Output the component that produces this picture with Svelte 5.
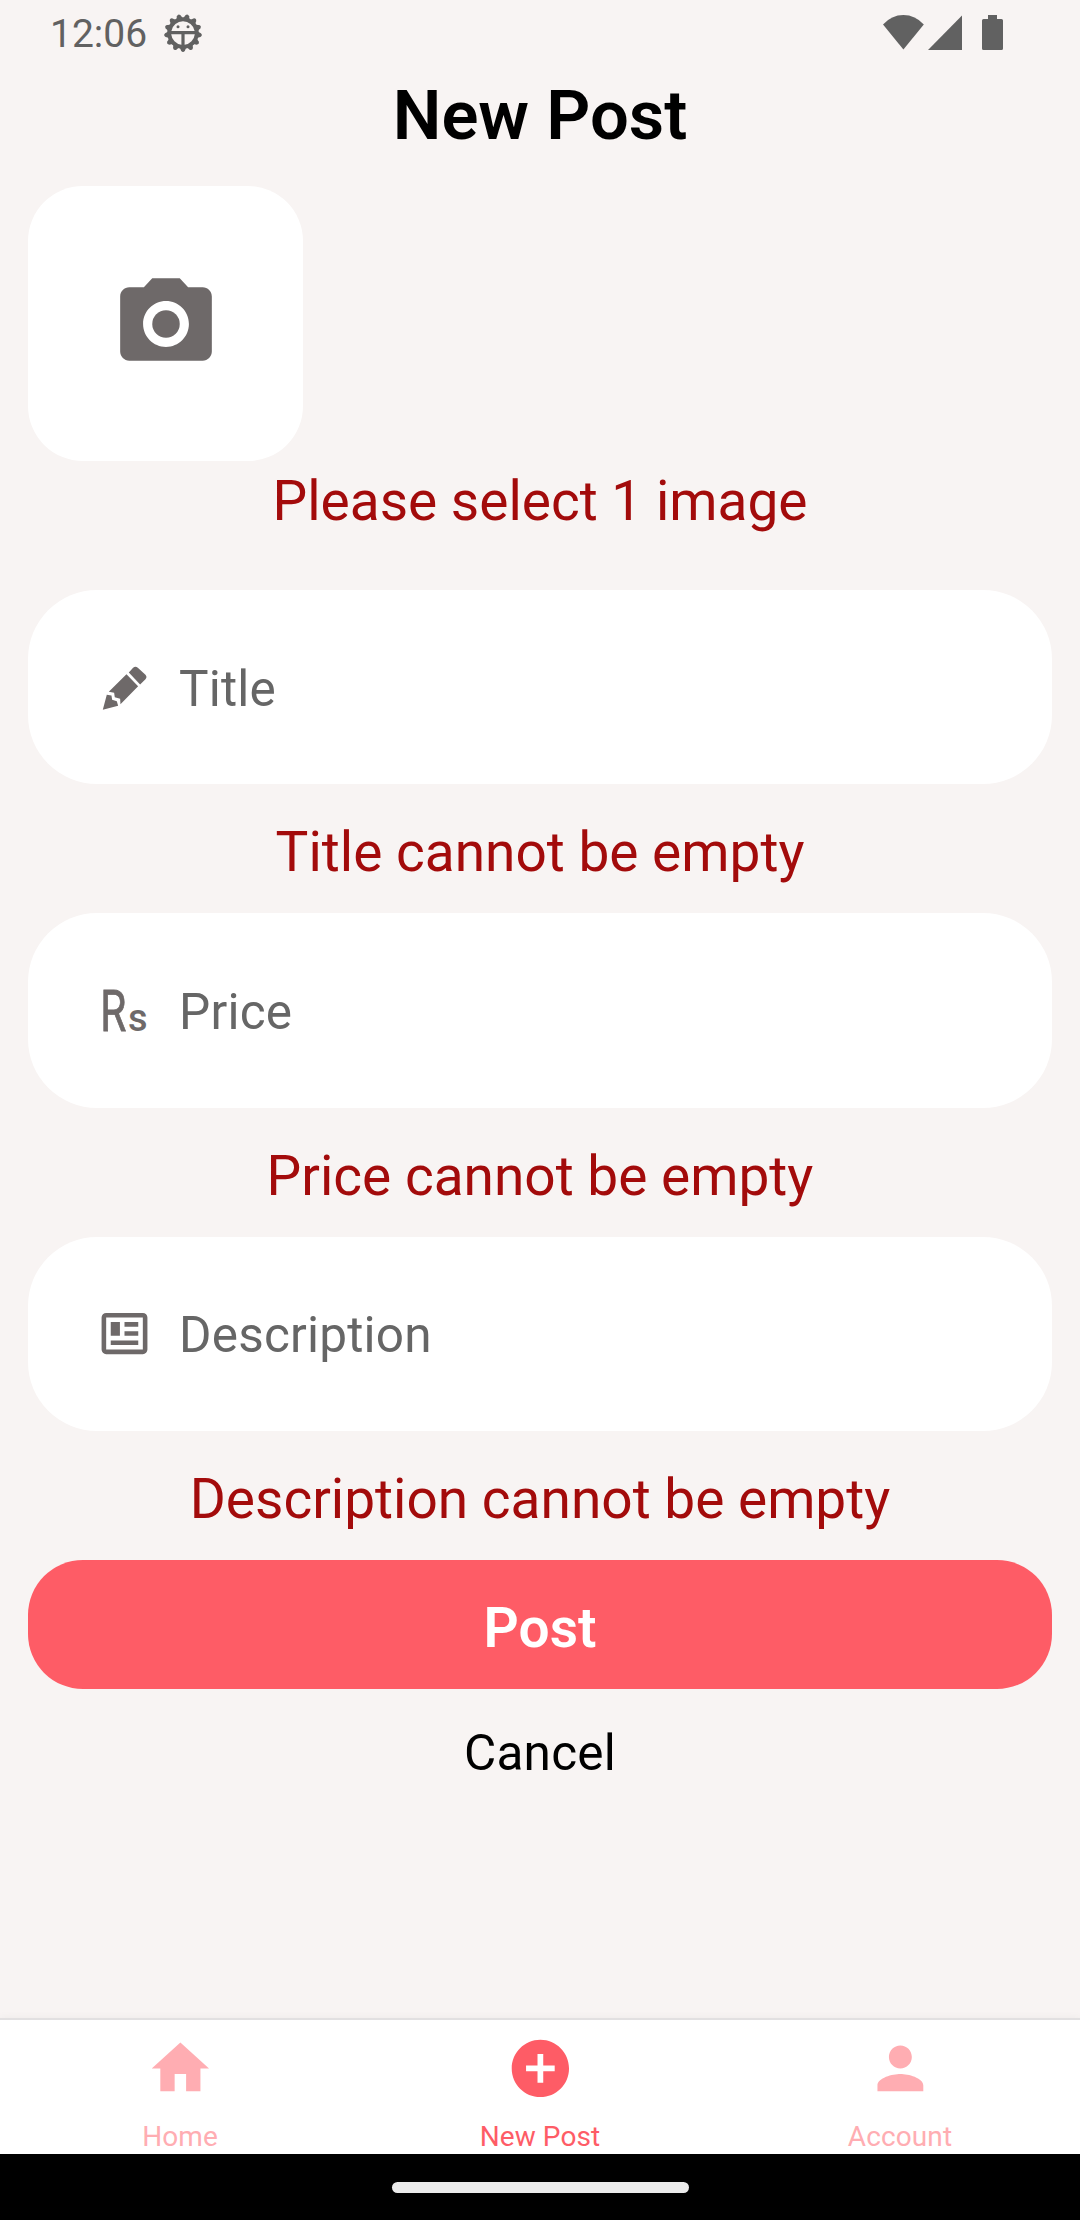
<script>
  const teeth = Array.from({ length: 13 }, (_, i) => (i * 360) / 13);
  const fields = [
    { icon: 'pencil', label: 'Title', error: 'Title cannot be empty' },
    { icon: 'rupee', label: 'Price', error: 'Price cannot be empty' },
    { icon: 'news', label: 'Description', error: 'Description cannot be empty' }
  ];
  const tabs = [
    { label: 'Home', path: 'M10 20v-6h4v6h5v-8h3L12 3 2 12h3v8z' },
    {
      label: 'New Post',
      active: true,
      path: 'M12 2C6.48 2 2 6.48 2 12s4.48 10 10 10 10-4.48 10-10S17.52 2 12 2zm5 11h-4v4h-2v-4H7v-2h4V7h2v4h4v2z'
    },
    {
      label: 'Account',
      path: 'M12 12c2.21 0 4-1.79 4-4s-1.79-4-4-4-4 1.79-4 4 1.79 4 4 4zm0 2c-2.67 0-8 1.34-8 4v2h16v-2c0-2.66-5.33-4-8-4z'
    }
  ];
</script>

<div class="screen">
  <header class="status">
    <span class="time">12:06</span>
    <svg class="gear" width="40" height="40" viewBox="-20 -20 40 40">
      {#each teeth as angle}
        <path d="M-3.4 14 L-1.9 17.800 Q0 20.200 1.9 17.800 L3.4 14z" transform="rotate({angle})" />
      {/each}
      <circle r="15.8" />
      <path class="hole" d="M-11.6 -2A11.8 11.8 0 0 1 11.6 -2zM-11.8 1.2H-1.6V11.8A12 12 0 0 1 -11.8 1.2zM11.8 1.2H1.6V11.8A12 12 0 0 0 11.8 1.2z" />
      <circle cx="-5" cy="-6.2" r="1.5" />
      <circle cx="5" cy="-6.2" r="1.5" />
    </svg>
    <svg class="signals" width="122" height="36" viewBox="0 0 122 36">
      <path d="M0 9.5Q8.500 0 20.400 0T40.800 9.500L20.400 34.400z" />
      <path d="M45 35L79 .5V35z" />
      <path d="M105 0h9v4h4.500q1.500 0 1.500 1.500v28q0 1.500-1.500 1.500h-18q-1.500 0-1.500-1.500v-28q0-1.500 1.500-1.500h4.500z" />
    </svg>
  </header>

  <main>
    <h1>New Post</h1>
    <button class="photo" aria-label="Add photo">
      <svg width="110" height="110" viewBox="0 0 24 24">
        <circle cx="12" cy="12" r="3" />
        <path d="M9 2L7.170 4H4c-1.100 0-2 .9-2 2v12c0 1.100.9 2 2 2h16c1.100 0 2-.9 2-2V6c0-1.100-.9-2-2-2h-3.170L15 2H9zm3 15c-2.760 0-5-2.240-5-5s2.240-5 5-5 5 2.240 5 5-2.240 5-5 5z" />
      </svg>
    </button>
    <p class="error photo-error">Please select 1 image</p>

    {#each fields as field}
      <div class="field">
        <svg class="icon" width="55" height="55" viewBox="0 0 55 55">
          {#if field.icon === 'pencil'}
            <g transform="translate(5.800 6.200) scale(.3333)">
              <path d="M78 19L91 5Q98 -2 105 5L128 26Q134 33 128 39L112 55z" />
              <path d="M71 24L106 60L53 114L52 98L36 93L34 80L18 77z" />
              <path d="M12 86L26 88L28 101L42 105L46 119L0 131z" />
            </g>
          {:else if field.icon === 'rupee'}
            <text class="rs big" transform="translate(3.300 48) scale(.73 1)">R</text>
            <text class="rs small" x="31" y="48">s</text>
          {:else}
            <g transform="scale(2.2917)">
              <path fill-rule="evenodd" d="M4 3h16a2 2 0 0 1 2 2v14a2 2 0 0 1-2 2H4a2 2 0 0 1-2-2V5a2 2 0 0 1 2-2zm0 2v14h16V5z" />
              <path d="M6 7h4v6H6zM12 7h6v2h-6zM12 11h6v2h-6zM6 15h12v2H6z" />
            </g>
          {/if}
        </svg>
        <span class="placeholder">{field.label}</span>
      </div>
      <p class="error">{field.error}</p>
    {/each}

    <button class="post">Post</button>
    <button class="cancel">Cancel</button>
  </main>

  <nav>
    {#each tabs as tab}
      <div class="tab" class:active={tab.active}>
        <svg width="68.750" height="68.750" viewBox="0 0 24 24"><path d={tab.path} /></svg>
        <span>{tab.label}</span>
      </div>
    {/each}
  </nav>
  <footer><span class="handle"></span></footer>
</div>

<style>
  :global(body) {
    margin: 0;
  }
  .screen {
    width: 1080px;
    height: 2220px;
    display: flex;
    flex-direction: column;
    background: #f8f4f3;
    font-family: Roboto, sans-serif;
    overflow: hidden;
  }
  svg {
    display: block;
    flex: none;
  }
  button {
    border: 0;
    padding: 0;
    margin: 0;
    font-family: inherit;
    background: none;
  }
  .status {
    box-sizing: border-box;
    height: 66px;
    padding: 0 75px 0 50px;
    display: flex;
    align-items: flex-start;
    color: #616161;
    fill: #616161;
  }
  .time {
    margin-top: 12px;
    width: 113.400px;
    font-size: 39px;
    line-height: 45px;
  }
  .gear {
    margin-top: 13px;
  }
  .hole {
    fill: #f8f4f3;
  }
  .signals {
    margin: 15px 0 0 auto;
  }
  main {
    flex: 1;
    min-height: 0;
    padding: 0 28px;
    display: flex;
    flex-direction: column;
  }
  h1 {
    margin: 10px 0 30px;
    font-size: 68.750px;
    line-height: 80px;
    font-weight: 600;
    text-align: center;
    color: #000;
  }
  .photo {
    width: 275px;
    height: 275px;
    border-radius: 55px;
    background: #fff;
    display: grid;
    place-items: center;
    fill: #6e6969;
  }
  .error {
    margin: 0;
    padding-top: 33px;
    height: 96px;
    font-size: 55px;
    line-height: 70px;
    text-align: center;
    color: #a30b0b;
  }
  .photo-error {
    padding-top: 5px;
    height: 124px;
  }
  .field {
    box-sizing: border-box;
    flex: none;
    height: 194.400px;
    padding-left: 69px;
    border-radius: 69px;
    background: #fff;
    display: flex;
    align-items: center;
    fill: #6e6969;
  }
  .icon {
    overflow: visible;
  }
  .rs {
    font-family: Roboto, sans-serif;
  }
  .big {
    font-size: 58px;
    font-weight: 400;
    stroke: #6e6969;
    stroke-width: 0.8px;
  }
  .small {
    font-size: 38px;
    font-weight: 500;
  }
  .placeholder {
    margin: 3px 0 0 27px;
    font-size: 49.500px;
    line-height: 58px;
    letter-spacing: 0.2px;
    color: #666;
  }
  .post {
    flex: none;
    height: 129px;
    padding-top: 7px;
    border-radius: 55px;
    background: #fe5c66;
    color: #fff;
    font-size: 55px;
    font-weight: 600;
  }
  .cancel {
    margin-top: 34px;
    font-size: 49.500px;
    line-height: 60px;
    letter-spacing: 0.2px;
    color: #000;
  }
  nav {
    height: 134px;
    border-top: 2px solid #e2e0e1;
    background: #fff;
    box-shadow: 0 -1px 8px rgba(0, 0, 0, 0.04);
    display: grid;
    grid-template-columns: repeat(3, 1fr);
  }
  .tab {
    display: flex;
    flex-direction: column;
    align-items: center;
    padding-top: 14px;
    color: #ffadb2;
    fill: #ffadb2;
  }
  .tab.active {
    color: #fe5c66;
    fill: #fe5c66;
  }
  .tab span {
    margin-top: 17px;
    font-size: 28px;
    line-height: 33px;
    letter-spacing: 0.1px;
  }
  footer {
    height: 66px;
    background: #000;
    display: grid;
    place-items: center;
  }
  .handle {
    width: 297px;
    height: 11px;
    border-radius: 6px;
    background: #ebebeb;
  }
</style>
